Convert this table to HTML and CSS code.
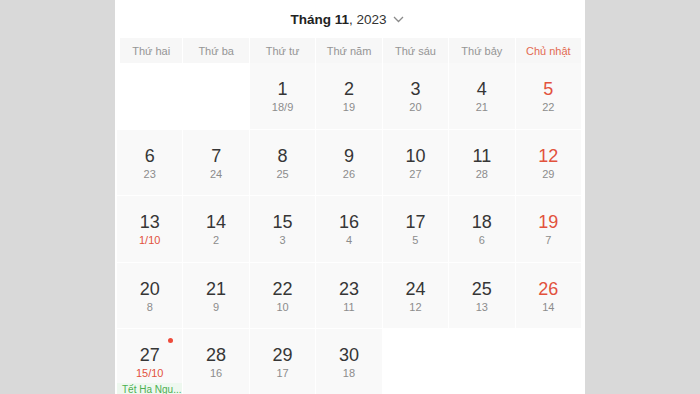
FILE: index.html
```html
<!DOCTYPE html>
<html lang="vi">
<head>
<meta charset="utf-8">
<link rel="stylesheet" href="styles.css">
</head>
<body>
<div class="page">
  <div class="panel">
    <div class="title">
      <span class="month">Tháng 11</span><span class="year">, 2023</span>
      <svg class="chev" width="11" height="7" viewBox="0 0 11 7"><path d="M1 1l4.5 4.5L10 1" fill="none" stroke="#8a8a8a" stroke-width="1.3"/></svg>
    </div>
    <div class="weekdays">
      <div class="wd">Thứ hai</div>
      <div class="wd">Thứ ba</div>
      <div class="wd">Thứ tư</div>
      <div class="wd">Thứ năm</div>
      <div class="wd">Thứ sáu</div>
      <div class="wd">Thứ bảy</div>
      <div class="wd sun">Chủ nhật</div>
    </div>
    <div class="grid">
      <div class="cell empty"></div>
      <div class="cell empty"></div>
      <div class="cell"><span class="d">1</span><span class="l">18/9</span></div>
      <div class="cell"><span class="d">2</span><span class="l">19</span></div>
      <div class="cell"><span class="d">3</span><span class="l">20</span></div>
      <div class="cell"><span class="d">4</span><span class="l">21</span></div>
      <div class="cell"><span class="d red">5</span><span class="l">22</span></div>

      <div class="cell"><span class="d">6</span><span class="l">23</span></div>
      <div class="cell"><span class="d">7</span><span class="l">24</span></div>
      <div class="cell"><span class="d">8</span><span class="l">25</span></div>
      <div class="cell"><span class="d">9</span><span class="l">26</span></div>
      <div class="cell"><span class="d">10</span><span class="l">27</span></div>
      <div class="cell"><span class="d">11</span><span class="l">28</span></div>
      <div class="cell"><span class="d red">12</span><span class="l">29</span></div>

      <div class="cell"><span class="d">13</span><span class="l red">1/10</span></div>
      <div class="cell"><span class="d">14</span><span class="l">2</span></div>
      <div class="cell"><span class="d">15</span><span class="l">3</span></div>
      <div class="cell"><span class="d">16</span><span class="l">4</span></div>
      <div class="cell"><span class="d">17</span><span class="l">5</span></div>
      <div class="cell"><span class="d">18</span><span class="l">6</span></div>
      <div class="cell"><span class="d red">19</span><span class="l">7</span></div>

      <div class="cell"><span class="d">20</span><span class="l">8</span></div>
      <div class="cell"><span class="d">21</span><span class="l">9</span></div>
      <div class="cell"><span class="d">22</span><span class="l">10</span></div>
      <div class="cell"><span class="d">23</span><span class="l">11</span></div>
      <div class="cell"><span class="d">24</span><span class="l">12</span></div>
      <div class="cell"><span class="d">25</span><span class="l">13</span></div>
      <div class="cell"><span class="d red">26</span><span class="l">14</span></div>

      <div class="cell"><span class="dot"></span><span class="d">27</span><span class="l red">15/10</span><span class="event">Tết Hạ Ngu...</span></div>
      <div class="cell"><span class="d">28</span><span class="l">16</span></div>
      <div class="cell"><span class="d">29</span><span class="l">17</span></div>
      <div class="cell"><span class="d">30</span><span class="l">18</span></div>
      <div class="cell empty"></div>
      <div class="cell empty"></div>
      <div class="cell empty"></div>
    </div>
  </div>
</div>
</body>
</html>
```
FILE: styles.css
```css
html, body {
  margin: 0;
  padding: 0;
  background: #d9d9d9;
  font-family: "Liberation Sans", Arial, sans-serif;
}
.page {
  width: 700px;
  height: 394px;
  overflow: hidden;
  display: flex;
  justify-content: flex-start;
}
.panel {
  margin-left: 115px;
  width: 464px;
  padding: 0 4px 0 2px;
  height: 394px;
  background: #ffffff;
  overflow: hidden;
}
.title {
  height: 38px;
  display: flex;
  align-items: center;
  justify-content: center;
  font-size: 13.5px;
  color: #222;
  padding-right: 4px;
  box-sizing: border-box;
}
.month { font-weight: bold; }
.year { color: #333; }
.chev { margin-left: 6px; margin-top: 1px; }
.weekdays {
  display: grid;
  grid-template-columns: repeat(7, 1fr);
  column-gap: 1px;
  height: 25px;
}
.wd {
  background: #f7f7f7;
  font-size: 11px;
  color: #959595;
  display: flex;
  align-items: center;
  justify-content: center;
}
.wd:first-child { margin-left: 3px; }
.wd.sun { color: #e36a52; }
.grid {
  display: grid;
  grid-template-columns: repeat(7, 1fr);
  grid-auto-rows: 65.5px;
  gap: 1px;
}
.cell {
  background: #f9f9f9;
  position: relative;
  display: flex;
  flex-direction: column;
  align-items: center;
  padding-top: 16px;
  box-sizing: border-box;
}
.cell.empty { background: #ffffff; }
.d {
  font-size: 18px;
  line-height: 20px;
  color: #363636;
}
.l {
  font-size: 11px;
  line-height: 13px;
  margin-top: 2px;
  color: #8c8c8c;
}
.red { color: #e2523d; }
.l.red { color: #e2523d; }
.dot {
  position: absolute;
  top: 9px;
  right: 9px;
  width: 5px;
  height: 5px;
  border-radius: 50%;
  background: #ee4b3b;
}
.event {
  margin-top: 3px;
  align-self: stretch;
  background: #eef8ef;
  color: #4caf50;
  font-size: 10px;
  line-height: 14px;
  padding-left: 5px;
  white-space: nowrap;
  overflow: hidden;
}
```
